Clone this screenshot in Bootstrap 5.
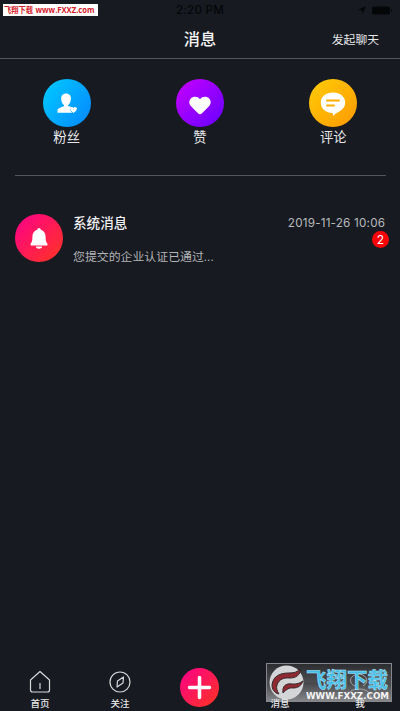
<!DOCTYPE html>
<html lang="zh-CN">
<head>
<meta charset="utf-8">
<meta name="viewport" content="width=device-width, initial-scale=1">
<title>消息</title>
<link rel="stylesheet" href="https://cdn.jsdelivr.net/npm/bootstrap@5.3.0/dist/css/bootstrap.min.css">
<style>
body{background:#171a21;color:#e8e8ea;font-family:"Liberation Sans","Noto Sans CJK SC",sans-serif;height:711px;overflow:hidden}
.status{height:20px;color:#050608;font:500 11.5px/21px Inter,sans-serif;letter-spacing:.3px}
.status svg{right:8px;top:4px}
.site-tag{left:3px;top:4px;width:95px;height:12px;background:#fff;color:#d3202b;font:bold 8.2px/12px "Open Sans","Noto Sans CJK SC",sans-serif;letter-spacing:0}
.topbar{height:39px;border-bottom:1px solid #54565c}
.topbar h1{font-size:16.2px;line-height:39px;font-weight:500;color:#f4f4f5}
.start{right:21px;top:0;font-size:11.8px;line-height:40px}
.shortcuts{padding-top:20px;height:116px;font-size:13.3px;line-height:22px}
.disc{width:48px;height:48px;border-radius:50%;flex:none}
.blue{background:linear-gradient(125deg,#00ccff,#0686ff)}
.purple{background:linear-gradient(135deg,#c800ff,#6500ff)}
.gold{background:linear-gradient(135deg,#ffcd08,#ff9900)}
.pink{background:linear-gradient(135deg,#ff008b,#ff3520)}
.rule{height:1px;background:#54565c;margin:0 14px 0 15px}
.message{padding:38px 15px 0;height:90px}
.message-body{padding-left:10px}
.message h2{font-size:13.6px;line-height:19px;font-weight:500;color:#f0f0f1}
.message p{font-size:11.9px;line-height:20px;color:#b3b4b7;margin-top:14px}
.message time{font:11.7px/18px Inter,sans-serif;letter-spacing:.2px;margin-right:-.2px;color:#b9babd;white-space:nowrap}
.count{width:17px;height:17px;background:#f90406;color:#fff;font:12px/17px Inter,sans-serif;right:-4px;top:17px}
.tabs{height:54px;border-top:1px solid #15181e;font-size:9.5px;line-height:12px;font-weight:500}
.tabs>div{width:80px;padding-top:12px}
.tabs>div>svg{margin-bottom:4px}
.tabs .add-tab{padding-top:10px;padding-right:2px}
.plus{width:39px;height:39px}
.mark-box{left:266px;top:663px;width:126px;height:39px;border:1px solid #85878a;background:linear-gradient(#2b2d31,#4b4d51 48%,#45474b 52%,#85878a)}
.over{z-index:2}
</style>
<script src="https://cdn.jsdelivr.net/npm/bootstrap@5.3.0/dist/js/bootstrap.bundle.min.js"></script>
</head>
<body class="d-flex flex-column position-relative">
<div class="status text-center position-relative flex-shrink-0">2:20 PM
<span class="site-tag position-absolute"><svg class="d-block position-static" width="95" height="12"><text x="1" y="9.3" textLength="29" lengthAdjust="spacingAndGlyphs" fill="#d3202b">飞翔下载</text><text x="32.500" y="9" textLength="59" lengthAdjust="spacingAndGlyphs" fill="#d3202b">www.FXXZ.com</text></svg></span>
<svg class="position-absolute" width="35" height="12" fill="#050608"><path d="M1 6 9 2 5.500 10 5 6.500z"/><rect x="15" y="2.500" width="18" height="8" rx="2"/><path d="M34 5v3q2-1.500 0-3"/></svg>
</div>
<header class="topbar position-relative text-center flex-shrink-0"><h1 class="m-0">消息</h1><span class="start position-absolute">发起聊天</span></header>
<main class="flex-grow-1">
<section class="shortcuts row g-0 text-center">
<div class="col d-flex flex-column align-items-center"><span class="disc blue"><svg class="d-block" width="48" height="48" fill="#fff"><path d="M23 14.500c3.300 0 5.200 2.300 4.900 5.500-.2 2.700-1.200 5-2.700 6v1l3 1c-2 1.800-1 4 1 5.700H14.500v-2.200c0-2 2-3 6.500-4.300v-1.200c-1.600-1-2.600-3.200-2.800-6-.2-3.200 1.600-5.500 4.800-5.500z"/><path d="M30.500 34c-2.700-1.800-4.200-3.600-2.900-5.400 1-1.200 2.400-.6 2.900.4.500-1 1.900-1.600 2.900-.4 1.400 1.800-.2 3.600-2.900 5.400z"/></svg></span><span>粉丝</span></div>
<div class="col d-flex flex-column align-items-center"><span class="disc purple"><svg class="d-block" width="48" height="48" fill="#fff"><path d="M24 35.200q-1 0-2-1l-7-7c-2.300-2.500-2.100-5.600-.2-7.600 2.500-2.600 6.600-2.400 9.200.6 2.600-3 6.700-3.200 9.200-.6 1.900 2 2.100 5.100-.2 7.600l-7 7q-1 1-2 1z"/></svg></span><span>赞</span></div>
<div class="col d-flex flex-column align-items-center"><span class="disc gold"><svg class="d-block" width="48" height="48"><path fill="#fff" d="M24 13.500c7 0 12.200 4 12.200 10 0 5-4 8.300-8.200 10.200-1.600.6-2.700 2.300-3.800 3.300l-.5-3C16.500 34 11.800 29.500 11.800 23.500c0-6 5.200-10 12.200-10z"/><path stroke="#ffae00" stroke-width="2" stroke-linecap="round" d="M18 21.500h12M18 26.500h7"/></svg></span><span>评论</span></div>
</section>
<div class="rule"></div>
<section class="message d-flex">
<span class="disc pink"><svg class="d-block" width="48" height="48" fill="#fff"><path d="M24 14q1.700 0 1.800 1.700c3.300 1 4.800 3.700 4.800 7 0 3.800.4 5.300 1.800 6.800v2H15.600v-2c1.400-1.500 1.800-3 1.800-6.800 0-3.300 1.500-6 4.800-7Q22.300 14 24 14zM20.800 32.500h6.400c-.3 3-6.100 3-6.400 0z"/></svg></span>
<div class="message-body flex-grow-1 position-relative">
<div class="d-flex justify-content-between"><h2 class="m-0">系统消息</h2><time>2019-11-26 10:06</time></div>
<p class="mb-0">您提交的企业认证已通过...</p>
<span class="count rounded-circle position-absolute text-center">2</span>
</div>
</section>
</main>
<nav class="tabs d-flex text-center flex-shrink-0">
<div class="d-flex flex-column align-items-center"><svg width="22" height="24" fill="none" stroke="#d7d7da" stroke-width="1.200" stroke-linejoin="round"><path d="M1.500 10 11 1.500 20.500 10v10q0 2-2 2h-15q-2 0-2-2zM11 13v6"/></svg><span>首页</span></div>
<div class="d-flex flex-column align-items-center"><svg width="22" height="24" fill="none" stroke="#d7d7da" stroke-width="1.200" stroke-linejoin="round"><circle cx="11" cy="12" r="10"/><path d="m14.500 7-.5 6-6 4 .5-6z"/></svg><span>关注</span></div>
<div class="add-tab d-flex flex-column align-items-center"><span class="disc pink plus"><svg class="d-block" width="39" height="39"><path stroke="#fff" stroke-width="3.500" stroke-linecap="round" d="M9.500 19.500h20M19.500 9.500v20"/></svg></span></div>
<div class="d-flex flex-column align-items-center"><svg width="22" height="24"></svg><span class="position-relative over">消息</span></div>
<div class="d-flex flex-column align-items-center"><svg width="22" height="24"></svg><span class="position-relative over">我</span></div>
</nav>
<div class="mark-box position-absolute"><svg class="d-block" width="124" height="37">
<circle cx="19.500" cy="18.500" r="17" fill="#d4d5d7"/>
<path fill="#8f2a33" stroke="#35282d" stroke-width="1" stroke-linejoin="round" d="M5 21C6 12 13 9 22 9c5 0 8-1 12-4-1 6-5 9-11 9-6-.5-11 1-13 7-1 3 0 6 2 9-5-1-7-5-7-9zM16 29c-1-7 3-10 9-9 5 .5 8-1 11-3-2 5-5 7-10 7-4-.5-6 1-10 5z"/>
<path d="M88 22c-7-3-6-11 4-12 9 1 10 9 4 12M80 34c1-6 5-9 12-9s11 3 12 9" fill="none" stroke="#a6a7aa"/>
<text x="39" y="22.500" textLength="82" lengthAdjust="spacingAndGlyphs" font-family="Noto Sans CJK SC,sans-serif" font-weight="700" font-size="21" fill="#42bde9" stroke="#b4e7f8" stroke-width=".5">飞翔下载</text>
<text x="39" y="34.500" textLength="83" lengthAdjust="spacingAndGlyphs" font-family="DejaVu Sans,sans-serif" font-weight="700" font-size="8" fill="#f4f4f4">WWW.FXXZ.COM</text>
</svg></div>
</body>
</html>
